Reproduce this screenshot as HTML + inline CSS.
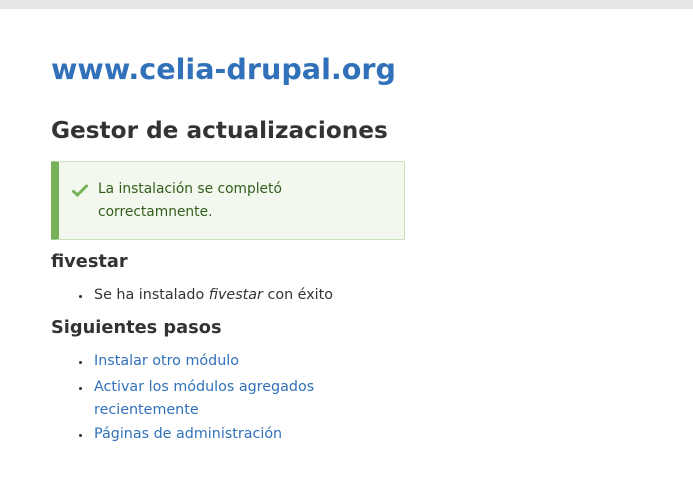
<!DOCTYPE html>
<html><head><meta charset="utf-8"><style>
body{margin:0;width:693px;height:481px;background:#fff;font-family:"DejaVu Sans","Liberation Sans",sans-serif;color:#333;position:relative;overflow:hidden}
.bar{position:absolute;left:0;top:0;width:693px;height:9px;background:#e6e6e6}
.a{position:absolute;white-space:nowrap}
h1{margin:0;font-size:28.6px;font-weight:bold;color:#3071b9}
h2{margin:0;font-size:23.2px;font-weight:bold;color:#333}
h3{margin:0;font-size:17.8px;font-weight:bold;color:#333}
.msg{position:absolute;left:51px;top:161px;height:77px;background:#f3f8ee;border:1px solid #c9e1bd;border-left:8px solid #77b259;border-radius:2px;width:345px}
.msg .t{position:absolute;left:39px;top:16px;font-size:13.8px;line-height:23px;color:#325e1c;width:300px}
li{position:absolute;font-size:14.3px;line-height:23px;white-space:nowrap;list-style:none}
li:before{content:"";position:absolute;left:-15px;top:11px;width:3px;height:3px;border-radius:2px;background:#333}
a{color:#3071b9;text-decoration:none}
</style></head><body>
<div class="bar"></div>
<h1 class="a" style="left:51px;top:52px">www.celia-drupal.org</h1>
<h2 class="a" style="left:51px;top:117px">Gestor de actualizaciones</h2>
<div class="msg">
<svg style="position:absolute;left:12px;top:21px" width="18" height="14" viewBox="0 0 18 14"><path d="M1.5 7.5 L6.5 12 L16.5 2" fill="none" stroke="#77b259" stroke-width="3"/></svg>
<div class="t">La instalación se completó<br>correctamnente.</div>
</div>
<h3 class="a" style="left:51px;top:251px">fivestar</h3>
<li style="left:94px;top:284px">Se ha instalado <i>fivestar</i> con éxito</li>
<h3 class="a" style="left:51px;top:317px">Siguientes pasos</h3>
<li style="left:94px;top:350px"><a>Instalar otro módulo</a></li>
<li style="left:94px;top:376px"><a>Activar los módulos agregados<br>recientemente</a></li>
<li style="left:94px;top:423px"><a>Páginas de administración</a></li>
</body></html>
